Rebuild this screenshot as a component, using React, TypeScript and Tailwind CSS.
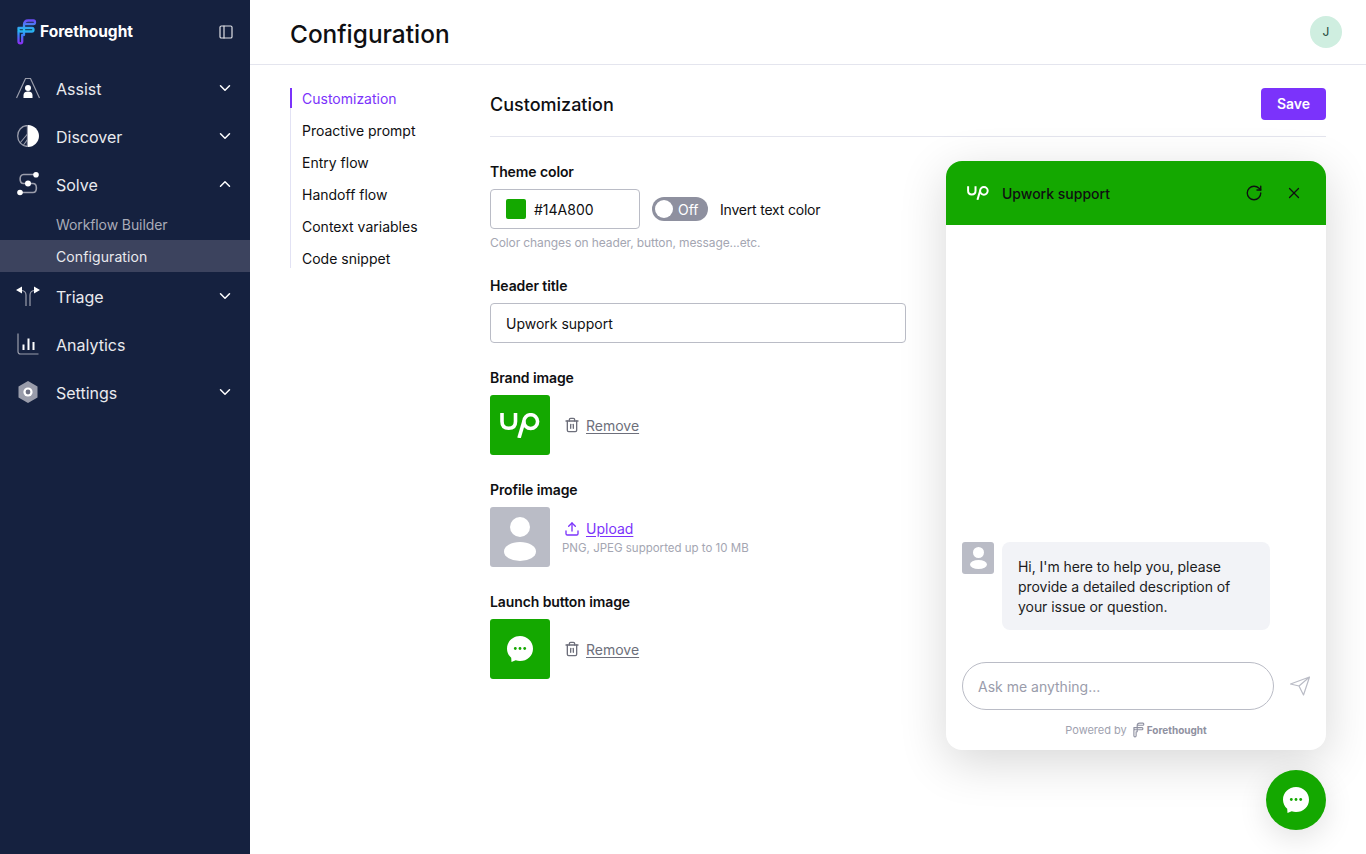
import { ChevronDown, ChevronUp, PanelLeft, RotateCw, Trash2, Upload, X } from "lucide-react";
import type { ReactNode } from "react";

function LogoMark({ className, mono }: { className: string; mono?: boolean }) {
  const stroke = mono ? "#8f91a1" : "url(#ftGrad)";
  return (
    <svg viewBox="0 0 20 26" fill="none" className={className}>
      <defs>
        <linearGradient id="ftGrad" x1="0" y1="0" x2="0" y2="1">
          <stop offset="0" stopColor="#6a4cf6" />
          <stop offset="0.42" stopColor="#22c0f0" />
          <stop offset="0.65" stopColor="#3f7cf5" />
          <stop offset="1" stopColor="#8b2ff5" />
        </linearGradient>
      </defs>
      <path
        d="M7 16V5.5C7 3 8.5 1.5 11 1.5H16.5C18.5 1.5 18.5 5 16.5 5H8.5M1.5 9H15C17 9 17 12.5 15 12.5H3.5C2 12.5 1.5 11.5 1.5 10.5V9M1.5 12V22.5C1.5 25 5.2 25 5.2 22.5V16"
        stroke={stroke}
        strokeWidth={mono ? 1.9 : 2.3}
        strokeLinecap="round"
        strokeLinejoin="round"
      />
    </svg>
  );
}

function AssistIcon() {
  return (
    <svg viewBox="0 0 24 22" fill="none" className="w-6 h-[22px]">
      <path d="M0.5 21L9.5 1.5H14.5L23.5 21" stroke="#9a9dab" strokeWidth="1.2" />
      <circle cx="12" cy="11" r="3" fill="#fff" />
      <path d="M7.5 21V18C7.5 15.5 9.5 14.5 12 14.5C14.5 14.5 16.5 15.5 16.5 18V21Z" fill="#fff" />
    </svg>
  );
}

function DiscoverIcon() {
  return (
    <svg viewBox="0 0 22 22" fill="none" className="w-[22px] h-[22px]">
      <path d="M10.5 0.5C4.5 0.7 0.7 5.5 0.7 11C0.7 16.5 4.5 21 10.5 21.5Z" stroke="#9a9dab" strokeWidth="1.3" />
      <path d="M10.5 9L3 18M10.5 14.5L6.5 20M10.5 17V21" stroke="#9a9dab" strokeWidth="1.1" />
      <path d="M11 0C17 0 22 5 22 11C22 17 17 22 11 22Z" fill="#fff" />
    </svg>
  );
}

function SolveIcon() {
  return (
    <svg viewBox="0 0 24 24" fill="none" className="w-6 h-6">
      <path
        d="M19 2.5H7.5C3 2.5 3 11.5 7.5 11.5H17C21.5 11.5 21.5 20.5 17 20.5H4"
        stroke="#9a9dab"
        strokeWidth="1.6"
      />
      <circle cx="20" cy="2.8" r="2.8" fill="#fff" />
      <circle cx="12" cy="11.5" r="3" fill="#fff" />
      <circle cx="4" cy="20.5" r="2.8" fill="#fff" />
    </svg>
  );
}

function TriageIcon() {
  return (
    <svg viewBox="0 0 24 22" fill="none" className="w-6 h-[22px]">
      <path d="M10 21V10C10 7.5 8 5.5 5 5.5M14 21V10C14 7.5 16 5.5 19 5.5" stroke="#9a9dab" strokeWidth="1.2" />
      <path d="M0 5L6 1.5V8.5ZM24 5L18 1.5V8.5Z" fill="#fff" />
    </svg>
  );
}

function AnalyticsIcon() {
  return (
    <svg viewBox="0 0 22 22" fill="none" className="w-[22px] h-[22px]">
      <path d="M1 0.5V18.5C1 20 2 21 3.5 21H21.5" stroke="#9a9dab" strokeWidth="1.2" />
      <path d="M6.5 11.5V17M11.5 5.5V17M16.5 9V17" stroke="#fff" strokeWidth="2" />
    </svg>
  );
}

function SettingsIcon() {
  return (
    <svg viewBox="0 0 20 22" fill="none" className="w-5 h-[22px]">
      <path d="M10 0L19.5 5.5V16.5L10 22L0.5 16.5V5.5Z" fill="#9a9dab" />
      <circle cx="10" cy="11" r="4.6" fill="#fff" />
      <circle cx="10" cy="11" r="2.4" fill="#6e7183" />
    </svg>
  );
}

function UpworkMark({ className }: { className: string }) {
  return (
    <svg viewBox="0 0 40 25" fill="none" className={className}>
      <path
        d="M2 0V8.5C2 13 4.5 15.3 8.7 15.3C13 15.3 15.5 13 15.5 8.5V0"
        stroke="#fff"
        strokeWidth="3.6"
      />
      <path d="M19 25L24 8" stroke="#fff" strokeWidth="3.6" />
      <circle cx="30.7" cy="8.6" r="6.9" stroke="#fff" strokeWidth="3.6" />
    </svg>
  );
}

function ChatBubble({ className }: { className: string }) {
  return (
    <svg viewBox="0 0 26 26" className={className}>
      <path d="M13 0C20.2 0 26 5.6 26 12.7C26 19.8 20.2 25 13 25C11.5 25 10 24.8 8.7 24.3L4.5 26L4.2 21.8C1.6 19.5 0 16.3 0 12.7C0 5.6 5.8 0 13 0Z" fill="#fff" />
      <circle cx="8.3" cy="12.5" r="1.4" fill="#14A800" />
      <circle cx="13" cy="12.5" r="1.4" fill="#14A800" />
      <circle cx="17.7" cy="12.5" r="1.4" fill="#14A800" />
    </svg>
  );
}

function PersonTile({ className, head, body }: { className: string; head: string; body: string }) {
  return (
    <div className={`flex flex-col items-center justify-center bg-[#babcc6] rounded-[3px] shrink-0 ${className}`}>
      <div className={`rounded-full bg-white ${head}`} />
      <div className={`rounded-[50%] bg-white ${body}`} />
    </div>
  );
}

function NavRow({ icon, label, open, closed }: { icon: ReactNode; label: string; open?: boolean; closed?: boolean }) {
  return (
    <div className="h-12 flex items-center pl-4 pr-4 text-white">
      <div className="w-6 flex justify-center shrink-0">{icon}</div>
      <span className="ml-4 pt-[2px] text-[16px] text-[#e9eaee] flex-1">{label}</span>
      {closed && <ChevronDown className="w-[18px] h-[18px]" strokeWidth={2} />}
      {open && <ChevronUp className="w-[18px] h-[18px]" strokeWidth={2} />}
    </div>
  );
}

function Label({ children }: { children: ReactNode }) {
  return <div className="text-[14px] font-semibold tracking-[-0.1px] leading-5 text-[#0f0f12] mb-[7px]">{children}</div>;
}

function RemoveLink() {
  return (
    <div className="flex items-center ml-[14px] text-[#6d6f7b]">
      <Trash2 className="w-4 h-4" strokeWidth={2} />
      <span className="ml-[6px] text-[14px] underline underline-offset-2 decoration-1">Remove</span>
    </div>
  );
}

const subNav = ["Customization", "Proactive prompt", "Entry flow", "Handoff flow", "Context variables", "Code snippet"];

export default function App() {
  return (
    <div className="flex h-[854px] w-full overflow-hidden bg-white font-['Inter',sans-serif] text-[#0f0f12]">
      {/* Sidebar */}
      <aside className="w-[250px] shrink-0 bg-[#15213f]">
        <div className="h-16 flex items-center pl-[17px] pr-4">
          <LogoMark className="w-5 h-[26px]" />
          <span className="ml-[3px] text-[15.5px] font-bold text-white flex-1">Forethought</span>
          <PanelLeft className="w-4 h-4 text-[#dfe0e5]" strokeWidth={1.8} />
        </div>
        <NavRow icon={<AssistIcon />} label="Assist" closed />
        <NavRow icon={<DiscoverIcon />} label="Discover" closed />
        <NavRow icon={<SolveIcon />} label="Solve" open />
        <div className="h-8 flex items-center pl-14 text-[14px] tracking-[-0.1px] text-[#a9abb8]">Workflow Builder</div>
        <div className="h-8 flex items-center pl-14 text-[14px] tracking-[0.1px] text-[#e9eaee] bg-[#3c435e]">Configuration</div>
        <NavRow icon={<TriageIcon />} label="Triage" closed />
        <NavRow icon={<AnalyticsIcon />} label="Analytics" />
        <NavRow icon={<SettingsIcon />} label="Settings" closed />
      </aside>

      <main className="flex-1 min-w-0 flex flex-col">
        <header className="h-[65px] shrink-0 border-b border-[#e4e5ee] flex items-center justify-between pl-10 pr-6">
          <h1 className="pt-1 text-[24.4px] font-medium">Configuration</h1>
          <div className="w-8 h-8 rounded-full bg-[#cfeee0] flex items-center justify-center text-[12px] text-[#24483a]">J</div>
        </header>

        <div className="flex flex-1 min-h-0 pl-10 pr-10">
          {/* Section list */}
          <nav className="w-[200px] shrink-0 pt-[23px]">
            <ul className="border-l border-[#e2e2f4] w-[160px] flex flex-col gap-3">
              {subNav.map((item, i) => (
                <li
                  key={item}
                  className={
                    i === 0
                      ? "h-5 flex items-center pl-[10px] -ml-px border-l-2 border-[#7b33fb] text-[14px] text-[#7b33fb]"
                      : "h-5 flex items-center pl-[11px] text-[14px]"
                  }
                >
                  {item}
                </li>
              ))}
            </ul>
          </nav>

          <div className="flex-1 min-w-0">
            <div className="h-[72px] border-b border-[#e4e5ee] flex items-center justify-between pt-[6px]">
              <h2 className="pt-[2px] text-[18px] font-medium">Customization</h2>
              <button className="w-[65px] h-8 rounded-[4px] bg-[#7b33fb] text-white text-[14px] font-semibold">Save</button>
            </div>

            <div className="flex justify-between">
              {/* Form */}
              <div className="w-[416px] pt-[25px]">
                <Label>Theme color</Label>
                <div className="flex items-center">
                  <div className="w-[150px] h-10 border border-[#babcc6] rounded-[4px] flex items-center pl-[15px]">
                    <span className="w-5 h-5 rounded-[2px] bg-[#14A800]" />
                    <span className="ml-2 text-[14px]">#14A800</span>
                  </div>
                  <div className="ml-3 w-14 h-6 rounded-full bg-[#8e909f] flex items-center pl-[3px] text-white text-[14px]">
                    <span className="w-[18px] h-[18px] rounded-full bg-white" />
                    <span className="ml-[5px]">Off</span>
                  </div>
                  <span className="ml-3 text-[14px] tracking-[-0.2px]">Invert text color</span>
                </div>
                <p className="mt-[5px] text-[12px] tracking-[-0.1px] leading-[18px] text-[#a4a6b2]">Color changes on header, button, message...etc.</p>

                <div className="mt-6">
                  <Label>Header title</Label>
                  <div className="h-10 border border-[#babcc6] rounded-[4px] flex items-center pl-[15px] text-[14px]">Upwork support</div>
                </div>

                <div className="mt-[25px]">
                  <Label>Brand image</Label>
                  <div className="flex items-center">
                    <div className="w-[60px] h-[60px] rounded-[3px] bg-[#14A800] flex items-center justify-center shrink-0">
                      <UpworkMark className="w-10 h-[25px]" />
                    </div>
                    <RemoveLink />
                  </div>
                </div>

                <div className="mt-[25px]">
                  <Label>Profile image</Label>
                  <div className="flex items-center">
                    <PersonTile className="w-[60px] h-[60px] gap-[5px] pt-1" head="w-5 h-5" body="w-8 h-[19px]" />
                    <div className="ml-3">
                      <div className="flex items-center ml-[2px] text-[#7b33fb]">
                        <Upload className="w-4 h-4" strokeWidth={2} />
                        <span className="ml-[6px] text-[14px] underline underline-offset-2 decoration-1">Upload</span>
                      </div>
                      <p className="text-[11.5px] leading-[16px] mt-[1px] text-[#a4a6b2]">PNG, JPEG supported up to 10 MB</p>
                    </div>
                  </div>
                </div>

                <div className="mt-[25px]">
                  <Label>Launch button image</Label>
                  <div className="flex items-center">
                    <div className="w-[60px] h-[60px] rounded-[3px] bg-[#14A800] flex items-center justify-center shrink-0">
                      <ChatBubble className="w-[26px] h-[26px]" />
                    </div>
                    <RemoveLink />
                  </div>
                </div>
              </div>

              {/* Widget preview */}
              <div className="w-[380px] h-[589px] mt-6 rounded-[16px] bg-white flex flex-col shadow-[0_12px_48px_rgba(0,0,0,0.16)]">
                <div className="h-16 shrink-0 rounded-t-[16px] bg-[#14A800] flex items-center pl-[21px] pr-[23px]">
                  <UpworkMark className="w-[22px] h-[14px]" />
                  <span className="ml-[13px] text-[14px] font-medium flex-1">Upwork support</span>
                  <RotateCw className="w-[18px] h-[18px]" strokeWidth={1.8} />
                  <X className="ml-[22px] w-[18px] h-[18px]" strokeWidth={1.6} />
                </div>

                <div className="flex-1 flex flex-col justify-end px-4">
                  <div className="flex items-start mb-8">
                    <PersonTile className="w-8 h-8 gap-[2px]" head="w-[11px] h-[11px]" body="w-[17px] h-[9px]" />
                    <div className="ml-2 w-[268px] rounded-[8px] bg-[#f2f3f7] pl-4 pr-3 pt-[15px] pb-[13px] text-[14px] tracking-[-0.05px] leading-5 text-[#1c1c22]">
                      Hi, I'm here to help you, please provide a detailed description of your issue or question.
                    </div>
                  </div>
                  <div className="flex items-center">
                    <div className="w-[312px] h-12 rounded-full border border-[#babcc6] flex items-center pl-[15px] text-[14px] text-[#9a9cab]">
                      Ask me anything...
                    </div>
                    <svg viewBox="0 0 20 20" fill="none" className="ml-4 w-5 h-5">
                      <path d="M0.5 8L19.5 1L13.5 19L9 10L0.5 8ZM19.5 1L9 10" stroke="#babcc6" strokeWidth="1.2" strokeLinejoin="round" />
                    </svg>
                  </div>
                </div>

                <div className="h-10 shrink-0 flex items-center justify-center text-[11px] text-[#a0a2af]">
                  <span>Powered by</span>
                  <LogoMark className="ml-[6px] w-3 h-4" mono />
                  <span className="ml-[2px] text-[10px] font-bold text-[#8f91a1]">Forethought</span>
                </div>
              </div>
            </div>
          </div>
        </div>
      </main>

      {/* Launcher floats over the page */}
      <button className="fixed left-[1266px] top-[770px] w-[60px] h-[60px] rounded-full bg-[#14A800] flex items-center justify-center shadow-[0_8px_30px_rgba(0,0,0,0.12)]">
        <ChatBubble className="w-[26px] h-[26px]" />
      </button>
    </div>
  );
}
